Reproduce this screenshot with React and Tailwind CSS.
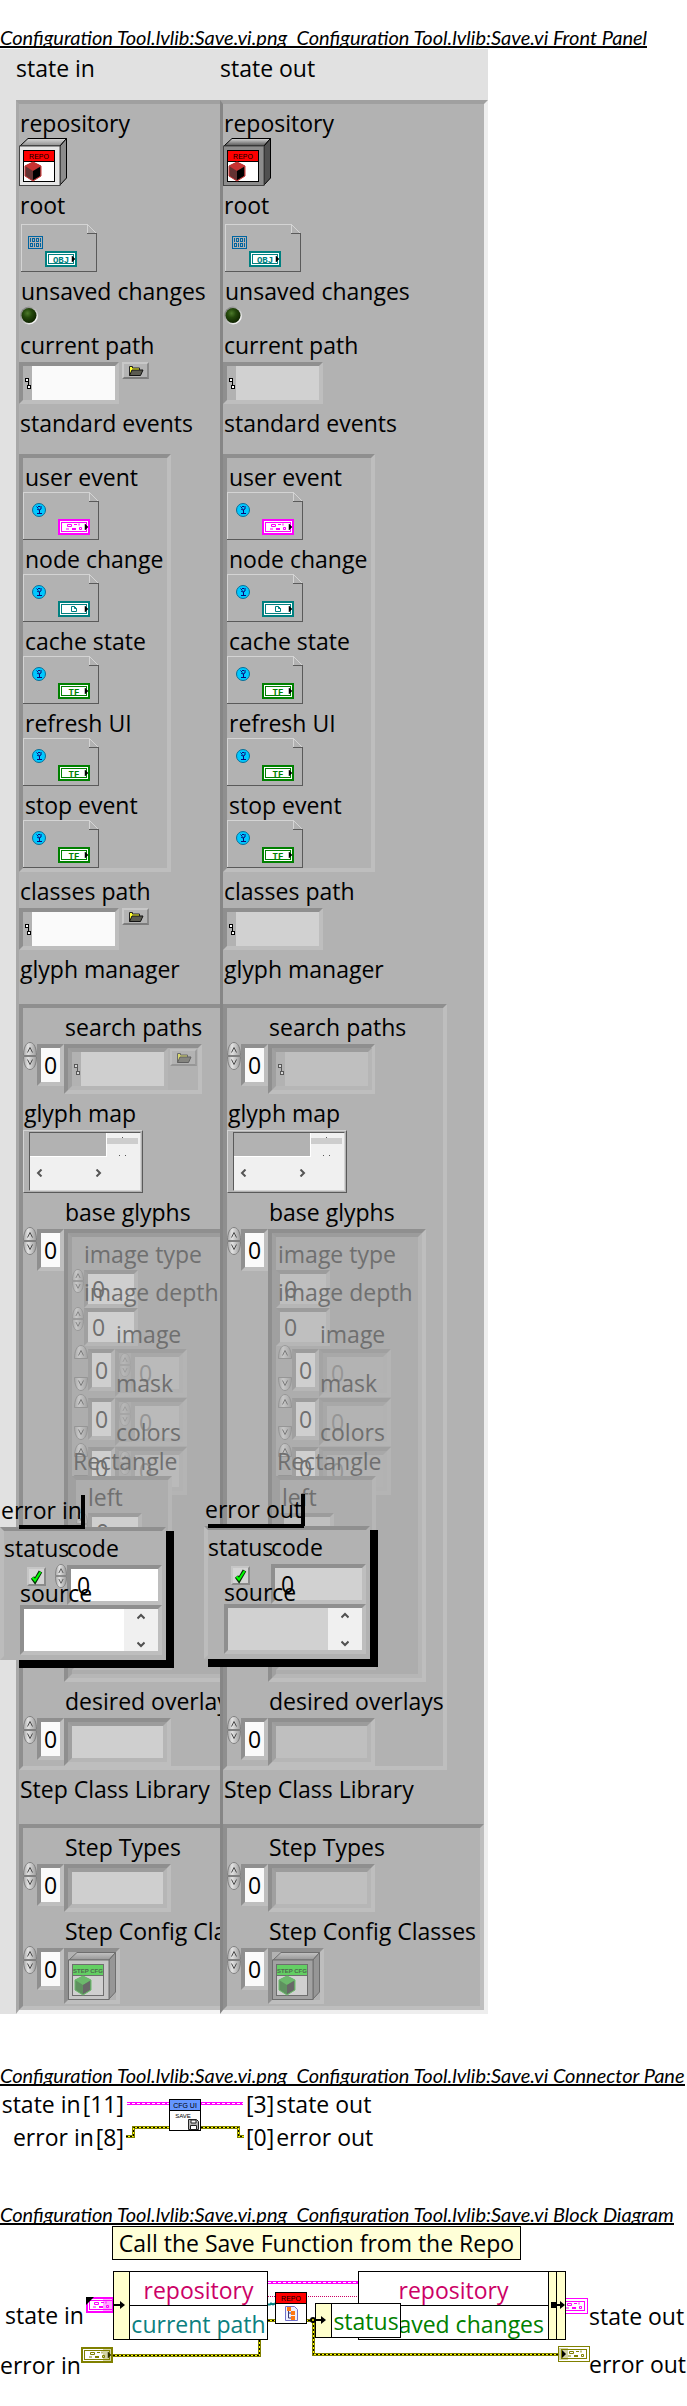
import React, { useId } from "react";

const cx = (...parts) => parts.filter(Boolean).join(" ");

const SUNKEN =
  "border-4 border-t-[#8f8f8f] border-l-[#8f8f8f] border-r-[#bebebe] border-b-[#bebebe]";
const SUNKEN_SOFT =
  "border-4 border-t-[#9c9c9c] border-l-[#a0a0a0] border-r-[#b6b6b6] border-b-[#b6b6b6]";

function Heading({ children }) {
  return (
    <h2 className="h-6 w-fit overflow-hidden whitespace-pre border-b-2 border-black font-['Lato',sans-serif] text-[20px] italic leading-[26px]">
      {children}
    </h2>
  );
}

/* ---------- small drawings ---------- */

function Cube({ x, y, top, left, right }) {
  return (
    <g>
      <path d={`M${x + 8} ${y}l8 4v10l-8 5l-8-5v-10z`} fill={left} />
      <path d={`M${x + 8} ${y}l8 4l-8 5l-8-5z`} fill={top} />
      <path d={`M${x + 8} ${y + 9}l7-4v9l-7 4z`} fill={right} />
      <path d={`M${x + 8} ${y}l8 4v10l-8 5l-8-5v-10z`} fill="none" stroke={top} />
    </g>
  );
}

function ClassIcon({ title, face, dark, step }) {
  const line = step ? "#6e6e6e" : "#000";
  return (
    <svg viewBox="0 0 48 48" className="block h-12 w-12" role="img" aria-label={title}>
      <defs>
        <linearGradient id={`top-${title.length}-${face.slice(1)}`} x1="0" x2="0" y1="1" y2="0">
          <stop offset="0" stopColor={dark} />
          <stop offset="1" stopColor={step ? "#c4c4c4" : "#d8d8d8"} />
        </linearGradient>
      </defs>
      <path d="M1 8L9 .5H47.500L41 8z" fill={`url(#top-${title.length}-${face.slice(1)})`} stroke={line} />
      <path d="M41 8L47.500 .5V40L41 47z" fill={dark} stroke={line} />
      <rect x=".5" y="8" width="40.500" height="39.500" fill={face} stroke={step ? "#6e6e6e" : "#444"} />
      <rect x="4.500" y="12.500" width="31" height="31" fill={step ? "#d0d0d0" : "#fff"} stroke={line} />
      <rect x="5" y="13" width="30" height="10" fill={step ? "#63cf63" : "#ff0000"} />
      <path d="M4 23.500H36" stroke={line} />
      <text
        x="20"
        y="20.500"
        textAnchor="middle"
        fontSize={step ? "6" : "7"}
        fontFamily="Liberation Sans, sans-serif"
        fontWeight={step ? "700" : "400"}
        fill={step ? "#4f6a4f" : "#000"}
      >
        {title}
      </text>
      {step ? (
        <Cube x={7} y={24} top="#6cb96c" left="#5f9160" right="#686868" />
      ) : (
        <Cube x={6} y={24} top="#c83232" left="#643232" right="#000" />
      )}
    </svg>
  );
}

function TerminalGlyph({ kind }) {
  if (kind === "OBJ" || kind === "TF") {
    return (
      <text
        x="16"
        y="11.500"
        textAnchor="middle"
        fontSize="9"
        fontWeight="700"
        fontFamily="Liberation Mono, monospace"
        fill="currentColor"
      >
        {kind}
      </text>
    );
  }
  if (kind === "doc") {
    return <path d="M13.500 5.500h3l2 2v3h-5z M16.500 5.500v2h2" fill="none" stroke="currentColor" />;
  }
  return (
    <g fill="none" stroke="currentColor">
      <path d="M9.500 5.500h4v2h-4zM16 5.500h3M21 4.500v2M21.500 8.500h2v2h-2z" />
      <path d="M8 10h3M14 9.500h4M14 10.500h4" />
    </g>
  );
}

function Terminal({ kind, x = 0, y = 0, color }) {
  return (
    <g transform={`translate(${x} ${y})`} color={color}>
      <rect x="1" y="1" width="30" height="14" fill="#fff" stroke="currentColor" strokeWidth="2" />
      <rect x="3.500" y="3.500" width="25" height="9" fill="#fff" stroke="currentColor" />
      <TerminalGlyph kind={kind} />
      <path d="M27 5l3 3l-3 3z" fill="#000" stroke="#000" strokeWidth=".5" />
    </g>
  );
}

function RefnumBox({ badge, kind, color, label }) {
  return (
    <svg viewBox="0 0 76 48" className="block h-12 w-[76px]" role="img" aria-label={label} shapeRendering="crispEdges">
      <path d="M.5 47.500V.5H66.500L75.500 9.500" fill="none" stroke="#d4d4d4" />
      <path d="M66.500 .5V9.500" fill="none" stroke="#d4d4d4" />
      <path d="M66 9.500H75.500V47.500H0" fill="none" stroke="#5a5a5a" />
      {badge === "bits" ? (
        <g fill="none" stroke="#0064a0">
          <rect x="7.500" y="12.500" width="14" height="12" />
          <path d="M9.500 14v4M11.500 14.500h2v3h-2zM15.500 14.500h2v3h-2zM19.500 14v4M9.500 19.500h2v3h-2zM13.500 19v4M15.500 19.500h2v3h-2zM19.500 19v4" />
        </g>
      ) : (
        <g shapeRendering="auto">
          <circle cx="16" cy="18" r="6.500" fill="#00c8ff" stroke="#0a6e96" />
          <path d="M13.500 14.500l2 2M18 14v3l-2 1l-2-1M15 14.500h2M16.500 18v3M14 21.500h5" fill="none" stroke="#0a0a78" />
        </g>
      )}
      <g shapeRendering="auto">
        <Terminal kind={kind} x={badge === "bits" ? 24 : 35} y={27} color={color} />
      </g>
    </svg>
  );
}

function Led() {
  return (
    <svg viewBox="0 0 20 20" className="block h-5 w-5" role="img" aria-label="off">
      <defs>
        <radialGradient id="led" cx=".4" cy=".35" r=".65">
          <stop offset="0" stopColor="#4d7a2b" />
          <stop offset=".45" stopColor="#24480c" />
          <stop offset="1" stopColor="#0f2400" />
        </radialGradient>
        <linearGradient id="ledring" x1="0" y1="0" x2="1" y2="1">
          <stop offset=".2" stopColor="#8a8a8a" />
          <stop offset=".8" stopColor="#f4f4f4" />
        </linearGradient>
      </defs>
      <circle cx="10" cy="9.500" r="9" fill="url(#ledring)" />
      <circle cx="10" cy="9.500" r="7.500" fill="url(#led)" />
    </svg>
  );
}

function FolderIcon() {
  return (
    <svg viewBox="0 0 16 12" className="h-3 w-4" aria-hidden="true">
      <path d="M1.500 10.500V1.500H4.500V3H11.500V5" fill="#ffff30" stroke="#222" />
      <path d="M1.500 10.500L4 5H15L12.500 10.500z" fill="#5a5a50" stroke="#111" />
    </svg>
  );
}

function PathGlyph() {
  return (
    <svg viewBox="0 0 6 11" className="h-[11px] w-1.5" aria-hidden="true" shapeRendering="crispEdges">
      <path d="M.5 .5h3v3h-3zM2.500 7.500h3v3h-3zM3.500 3.500v4" fill="#fff" stroke="#000" />
    </svg>
  );
}

/* ---------- controls ---------- */

function Half({ down, label }) {
  const id = useId();
  return (
    <button type="button" aria-label={label} className="block min-h-0 flex-none">
      <svg viewBox="0 0 14 14" className="block h-full w-full" preserveAspectRatio="none">
        <defs>
          <linearGradient id={id} x1="0" x2="1" y1="0" y2="0">
            <stop offset="0" stopColor="#a8a8a8" />
            <stop offset=".35" stopColor="#e2e2e2" />
            <stop offset="1" stopColor="#9a9a9a" />
          </linearGradient>
        </defs>
        <g transform={down ? "matrix(1 0 0 -1 0 14)" : undefined}>
          <path d="M.5 13.500C.5 6 3 .5 7 .5S13.500 6 13.500 13.500z" fill={`url(#${id})`} stroke="#808080" />
          <path d="M4.500 10.500L7 5.500L9.500 10.500" fill="none" stroke="#4e4e4e" />
        </g>
      </svg>
    </button>
  );
}

function Spinner({ name, small, split, faded, className }) {
  return (
    <div
      className={cx(
        "flex flex-none flex-col",
        small ? "w-3 *:h-3 *:w-3" : "w-3.5 *:h-3.5 *:w-3.5",
        split && "h-[46px] justify-between",
        faded,
        className
      )}
    >
      <Half label={`Increase ${name}`} />
      <Half down label={`Decrease ${name}`} />
    </div>
  );
}

function IndexBox({ name, dim }) {
  return (
    <input
      type="text"
      defaultValue="0"
      aria-label={`${name} index`}
      className={cx(
        "h-[42px] w-[27px] flex-none p-0 text-center text-[23px] leading-8",
        dim ? "bg-[#cfcfcf] text-[#6f6f6f]" : "bg-[#fafafa]",
        dim ? SUNKEN_SOFT : SUNKEN
      )}
    />
  );
}

function Field({ label, indent = "", gap = "", htmlFor, children }) {
  const cls = cx("block h-8 whitespace-nowrap leading-[34px]", indent);
  return (
    <div className="pt-0.5">
      {htmlFor ? (
        <label htmlFor={htmlFor} className={cls}>
          {label}
        </label>
      ) : (
        <div className={cls}>{label}</div>
      )}
      <div className={gap}>{children}</div>
    </div>
  );
}

function PathBox({ id, indicator, name, dim }) {
  return (
    <div
      className={cx(
        "flex h-[42px] w-[100px] flex-none items-center",
        dim ? SUNKEN_SOFT : SUNKEN
      )}
    >
      <span className={cx("flex w-[9px] flex-none justify-center", dim && "opacity-50")}>
        <PathGlyph />
      </span>
      <input
        id={id}
        type="text"
        aria-label={name}
        readOnly={indicator}
        className={cx(
          "h-full min-w-0 flex-1",
          dim ? (indicator ? "bg-[#bfbfbf]" : "bg-[#cfcfcf]") : indicator ? "bg-[#d1d1d1]" : "bg-[#fafafa]"
        )}
      />
    </div>
  );
}

function BrowseButton({ name, dim }) {
  return (
    <button
      type="button"
      aria-label={`Browse ${name}`}
      className={cx(
        "flex h-[17px] w-[27px] flex-none items-center justify-center border-2 border-t-[#c8c8c8] border-l-[#c8c8c8] border-r-[#8a8a8a] border-b-[#7c7c7c] bg-[#b4b4b4]",
        dim && "opacity-50"
      )}
    >
      <FolderIcon />
    </button>
  );
}

function PathField({ label, indicator }) {
  const id = useId();
  return (
    <Field label={label} htmlFor={id} indent="pl-px" gap="pt-0.5">
      <div className="flex items-start gap-[3px]">
        <PathBox id={id} indicator={indicator} />
        {!indicator && <BrowseButton name={label} />}
      </div>
    </Field>
  );
}

function ArrayField({ label, children }) {
  return (
    <Field label={label} indent="pl-[42px]" gap="pt-0.5">
      <div className="flex items-start">
        <Spinner name={label} className="-mt-0.5" />
        <IndexBox name={label} />
        {children}
      </div>
    </Field>
  );
}

function EmptyElement({ indicator }) {
  return (
    <div className={cx("h-12 w-[107px] flex-none", SUNKEN)}>
      <div className={cx("h-full", SUNKEN_SOFT, indicator ? "bg-[#bfbfbf]" : "bg-[#cfcfcf]")} />
    </div>
  );
}

function GlyphMap() {
  return (
    <div className="flex h-[63px] w-[120px] border border-t-[#d4d4d4] border-l-[#d4d4d4] border-r-[#5a5a5a] border-b-[#5a5a5a] py-px pr-px pl-[5px]">
      <div className="flex w-full flex-col border border-t-[#5a5a5a] border-l-[#5a5a5a] border-r-[#d4d4d4] border-b-[#d4d4d4] bg-[#f0f0f0]">
        <div className="flex h-6">
          <div className="w-[77px] border-r border-b border-white bg-[#b2b2b2]" />
          <div className="flex flex-1 flex-col items-center pr-0.5">
            <span className="mt-1 h-px w-px bg-[#555]" />
            <span className="h-1.5 w-full bg-[#cdcdcd]" />
            <span className="mt-[11px] h-px w-[7px] border-x border-[#555]" />
          </div>
        </div>
        <div className="flex h-8 items-center gap-[52px] pl-1.5">
          {["M5.500 .5L2 4L5.500 7.500", "M1.500 .5L5 4L1.500 7.500"].map((d, i) => (
            <button key={d} type="button" aria-label={i ? "Scroll right" : "Scroll left"} className="h-2 w-[7px]">
              <svg viewBox="0 0 7 8" className="block h-2 w-[7px]">
                <path d={d} fill="none" stroke="#555" strokeWidth="2" />
              </svg>
            </button>
          ))}
        </div>
      </div>
    </div>
  );
}

/* ---------- base glyphs: disabled element with overlapping captions ---------- */

function DimNumber({ label, indicator }) {
  return (
    <div className="relative flex h-[38px] items-start">
      {!indicator && <Spinner small name={label} faded="opacity-50" />}
      <input
        type="text"
        defaultValue="0"
        readOnly={indicator}
        aria-label={label}
        className={cx(
          "mt-px h-[38px] w-[54px] flex-none pl-1 text-[23px] leading-8 text-[#6f6f6f]",
          SUNKEN_SOFT,
          indicator ? "bg-[#bfbfbf]" : "bg-[#cfcfcf]"
        )}
      />
      <span className={cx("absolute bottom-full h-8 leading-[34px]", indicator ? "left-0.5" : "left-3")}>{label}</span>
    </div>
  );
}

function DimArray({ label, indicator }) {
  return (
    <div className="relative flex h-[49px] items-start pl-0.5">
      <Spinner split name={label} faded="opacity-50" className="-mt-1" />
      <IndexBox dim name={label} />
      <div className="h-12 w-[72px] border-4 border-t-[#a0a0a0] border-l-[#a4a4a4] border-r-[#b4b4b4] border-b-[#b4b4b4]">
        <div className="flex">
          {!indicator && <Spinner small name={`${label} element`} faded="opacity-20" />}
          <input
            type="text"
            defaultValue="0"
            readOnly={indicator}
            aria-label={`${label} element`}
            className={cx(
              "h-10 min-w-0 flex-1 border-4 border-t-[#a8a8a8] border-l-[#a8a8a8] border-r-[#b2b2b2] border-b-[#b2b2b2] pl-1 text-[23px] leading-8 text-[#959595]",
              indicator ? "bg-[#b3b3b3]" : "bg-[#bababa]"
            )}
          />
        </div>
      </div>
      <span className="absolute bottom-full left-11 h-8 leading-[34px]">{label}</span>
    </div>
  );
}

function BaseGlyphs({ indicator }) {
  return (
    <div
      className={cx(
        "h-[453px] flex-none bg-[#adadad] text-[#6f6f6f]",
        indicator ? "w-[158px]" : "w-[200px]",
        SUNKEN
      )}
    >
      <div className={cx("h-full pt-8", SUNKEN_SOFT)}>
        <DimNumber label="image type" indicator={indicator} />
        <DimNumber label="image depth" indicator={indicator} />
        <div className="pt-1">
          <DimArray label="image" indicator={indicator} />
          <DimArray label="mask" indicator={indicator} />
          <DimArray label="colors" indicator={indicator} />
        </div>
        <div className="relative -mt-5 h-[194px] w-[100px]">
          <div className={cx("h-full bg-[#adadad] pt-8", SUNKEN_SOFT)}>
            <DimNumber label="left" indicator={indicator} />
          </div>
          <span className="absolute bottom-full left-px h-8 leading-[34px]">Rectangle</span>
        </div>
      </div>
    </div>
  );
}

/* ---------- clusters ---------- */

const EVENTS = [
  ["user event", "cluster", "#ff00ff"],
  ["node change", "doc", "#008080"],
  ["cache state", "TF", "#008000"],
  ["refresh UI", "TF", "#008000"],
  ["stop event", "TF", "#008000"],
];

function StateCluster({ indicator }) {
  const repoFace = indicator ? "#8c8c8c" : "#e6e6e6";
  const repoSide = indicator ? "#505050" : "#8c8c8c";
  return (
    <>
      <Field label="repository" indent="pl-px">
        <ClassIcon title="REPO" face={repoFace} dark={repoSide} />
      </Field>
      <Field label="root" indent="pl-px" gap="pt-1 pl-0.5">
        <RefnumBox badge="bits" kind="OBJ" color="#008080" label="root" />
      </Field>
      <Field label="unsaved changes" indent="pl-0.5">
        <Led />
      </Field>
      <PathField label="current path" indicator={indicator} />
      <Field label="standard events" indent="pl-px" gap="pt-4">
        <div className={cx("w-[152px]", SUNKEN)}>
          {EVENTS.map(([name, kind, color]) => (
            <Field key={name} label={name} indent="pl-0.5">
              <RefnumBox badge="event" kind={kind} color={color} label={name} />
            </Field>
          ))}
        </div>
      </Field>
      <PathField label="classes path" indicator={indicator} />
      <Field label="glyph manager" indent="pl-px" gap="pt-5">
        <div className={cx(indicator ? "w-[224px]" : "w-[260px]", SUNKEN)}>
          <ArrayField label="search paths">
            <div className={cx("flex h-[50px] flex-none items-start", indicator ? "w-[107px]" : "w-[138px]", SUNKEN)}>
              <PathBox dim indicator={indicator} name="search path" />
              {!indicator && (
                <div className="pt-px pl-0.5">
                  <BrowseButton dim name="search path" />
                </div>
              )}
            </div>
          </ArrayField>
          <Field label="glyph map" indent="pl-px" gap="pt-0.5">
            <GlyphMap />
          </Field>
          <ArrayField label="base glyphs">
            <BaseGlyphs indicator={indicator} />
          </ArrayField>
          <ArrayField label="desired overlays">
            <EmptyElement indicator={indicator} />
          </ArrayField>
        </div>
      </Field>
      <Field label="Step Class Library" indent="pl-px" gap="pt-5">
        <div className={cx("pb-0.5", !indicator && "w-[264px]", SUNKEN)}>
          <ArrayField label="Step Types">
            <EmptyElement indicator={indicator} />
          </ArrayField>
          <ArrayField label="Step Config Classes">
            <div className={cx("h-14 w-14 flex-none", SUNKEN)}>
              <ClassIcon step title="STEP CFG" face={indicator ? "#a2a2a2" : "#c6c6c6"} dark="#969696" />
            </div>
          </ArrayField>
        </div>
      </Field>
    </>
  );
}

function ScrollArrow({ down }) {
  return (
    <button type="button" aria-label={down ? "Scroll down" : "Scroll up"} className="flex h-3.5 w-full items-center justify-center">
      <svg viewBox="0 0 8 7" className="h-[7px] w-2">
        <path d={down ? "M.5 1.500L4 5L7.500 1.500" : "M.5 5.500L4 2L7.500 5.500"} fill="none" stroke="#505050" strokeWidth="2" />
      </svg>
    </button>
  );
}

function ErrorCluster({ title, indicator }) {
  const id = useId();
  const fill = indicator ? "bg-[#d1d1d1]" : "bg-white";
  return (
    <div className="relative w-[174px]">
      <div
        className={cx(
          "h-[34px] border-r-4 border-black whitespace-nowrap pl-px leading-[30px]",
          indicator ? "w-[101px]" : "w-[85px]"
        )}
      >
        {title}
      </div>
      <div
        className={cx(
          "absolute top-[30px] h-1 bg-black",
          indicator ? "left-1 w-24" : "left-[19px] w-[66px]"
        )}
      />
      <div className="-mt-0.5 flex">
        <div className="h-[133px] w-[166px] border-4 border-t-[#8f8f8f] border-l-[#bcbcbc] border-r-[#b2b2b2] border-b-[#b2b2b2] bg-[#b2b2b2]">
          <div className="flex h-8 leading-[34px]">
            <label htmlFor={`${id}s`} className="w-[63px]">status</label>
            <label htmlFor={`${id}c`}>code</label>
          </div>
          <div className="flex h-[42px] items-start">
            <div className="relative mt-1 ml-[23px] h-[19px] w-[19px] flex-none">
              <input
                id={`${id}s`}
                type="checkbox"
                defaultChecked
                className="block h-full w-full appearance-none border-2 border-t-[#c6c6c6] border-l-[#c6c6c6] border-r-[#8a8a8a] border-b-[#8a8a8a] bg-[#d4d4d4]"
              />
              <svg viewBox="0 0 19 19" className="pointer-events-none absolute inset-0">
                <path d="M5.500 10.500L8 14L13.500 4.500" fill="none" stroke="#053005" strokeWidth="4" />
                <path d="M5.500 10.500L8 13.500L13.500 5" fill="none" stroke="#00ff00" strokeWidth="2" />
              </svg>
            </div>
            <div className="flex w-[21px] flex-none justify-end pt-px">
              {!indicator && <Spinner small name={`${title} code`} />}
            </div>
            <input
              id={`${id}c`}
              type="text"
              defaultValue="0"
              readOnly={indicator}
              className={cx("mt-0.5 h-10 min-w-0 flex-1 pl-1.5 text-[23px] leading-8", SUNKEN, fill)}
            />
          </div>
          <div className="relative h-[50px] pl-4">
            <label htmlFor={`${id}m`} className="absolute bottom-full left-4 -mb-1 leading-8">
              source
            </label>
            <div className={cx("flex h-full", SUNKEN)}>
              <textarea id={`${id}m`} readOnly={indicator} className={cx("h-full min-w-0 flex-1 resize-none", fill)} />
              <div className="flex w-[34px] flex-none flex-col justify-between bg-[#f0f0f0]">
                <ScrollArrow />
                <ScrollArrow down />
              </div>
            </div>
          </div>
        </div>
        <div className="mt-1 w-2 bg-black" />
      </div>
      <div className={cx("h-2 bg-black", indicator ? "ml-1" : "ml-[19px]")} />
    </div>
  );
}

function FrontPanel() {
  return (
    <div className="relative mt-px w-[488px] max-w-full bg-[#e1e1e1] pl-4">
      <div className="flex h-[51px] pt-0.5 leading-[34px]">
        <div className="w-[204px]">state in</div>
        <div>state out</div>
      </div>
      <div className="flex items-stretch">
        <section
          aria-label="state in"
          className="w-[204px] flex-none overflow-hidden border-t-4 border-b-4 border-l-[3px] border-t-[#a0a0a0] border-b-[#f4f4f4] border-l-[#a8a8a8] bg-[#b2b2b2]"
        >
          <StateCluster />
        </section>
        <section
          aria-label="state out"
          className="min-w-0 flex-1 border-4 border-l-[3px] border-t-[#a0a0a0] border-b-[#eeeeee] border-l-[#868686] border-r-[#eeeeee] bg-[#b2b2b2]"
        >
          <StateCluster indicator />
        </section>
      </div>
      <div className="absolute top-[1446px] left-0">
        <ErrorCluster title="error in" />
      </div>
      <div className="absolute top-[1445px] left-[204px]">
        <ErrorCluster title="error out" indicator />
      </div>
    </div>
  );
}

/* ---------- connector pane ---------- */

function ClusterWire({ d }) {
  return (
    <>
      <path d={d} fill="none" stroke="#ff00ff" strokeWidth="3" />
      <path d={d} fill="none" stroke="#fff" strokeDasharray="3 2" />
    </>
  );
}

function ErrorWire({ d }) {
  return (
    <>
      <path d={d} fill="none" stroke="#808000" strokeWidth="3" />
      <path d={d} fill="none" stroke="#ffff00" />
      <path d={d} fill="none" stroke="#000" strokeDasharray="2 2" />
    </>
  );
}

function PinRow({ first, second, end }) {
  return (
    <div className={cx("flex h-[33px] whitespace-nowrap", end ? "justify-end gap-0.5" : "gap-0.5")}>
      <span>{first}</span>
      <span>{second}</span>
    </div>
  );
}

function ConnectorPane() {
  return (
    <div className="flex pt-px leading-[34px]">
      <div className="w-[124px]">
        <PinRow end first="state in" second="[11]" />
        <PinRow end first="error in" second="[8]" />
      </div>
      <svg viewBox="0 0 122 66" className="h-[66px] w-[122px] flex-none" role="img" aria-label="Save.vi connector pane">
        <ClusterWire d="M3 16.500H119" />
        <ErrorWire d="M2 49.500H9.500V40.500H114.500V49.500H120" />
        <rect x="45.500" y="12.500" width="31" height="31" fill="#fff" stroke="#000" />
        <rect x="46" y="13" width="30" height="10" fill="#6496ff" />
        <path d="M45 23.500H77" stroke="#000" />
        <text x="61" y="20.500" textAnchor="middle" fontSize="7" fontFamily="Liberation Sans, sans-serif">CFG UI</text>
        <text x="59" y="31" textAnchor="middle" fontSize="6" fontFamily="Liberation Sans, sans-serif">SAVE</text>
        <path d="M64.500 32.500H72.500L74.500 34.500V42.500H64.500z" fill="#b4b4b4" stroke="#222" />
        <path d="M67 33h5v3h-5z M66.500 38.500h6v4h-6z" fill="#fff" stroke="#222" />
      </svg>
      <div>
        <PinRow first="[3]" second="state out" />
        <PinRow first="[0]" second="error out" />
      </div>
    </div>
  );
}

/* ---------- block diagram ---------- */

function Arrow({ x, y }) {
  return <path d={`M${x} ${y - 1}h6v-3l5 4l-5 4v-3h-6z`} fill="#000" />;
}

function BlockDiagram() {
  return (
    <div className="relative h-[181px]">
      <svg viewBox="0 0 687 181" width="687" height="181" className="absolute top-0 left-0" aria-hidden="true">
        <ClusterWire d="M268 57.500H358" />
        <path d="M268 71.500H275M308 71.500H358" stroke="#cc0066" strokeDasharray="1 1" />
        <path d="M268 79.500h2l1-1l2 1l2-1" stroke="#008080" fill="none" strokeWidth="2" />
        <ErrorWire d="M268 95.500H315" />
        <ErrorWire d="M113 130.500H259.500V115" />
        <ErrorWire d="M313.500 96V129.500H558" />
        <circle cx="313" cy="95" r="3" fill="#000" />
        <circle cx="313" cy="95" r="1" fill="#ffff00" />
        <g color="#ff00ff">
          <rect x="87" y="73" width="26" height="14" fill="#fff" stroke="currentColor" strokeWidth="2" />
          <rect x="89.500" y="75.500" width="23" height="9" fill="none" stroke="currentColor" />
          <g transform="translate(85 72)">
            <TerminalGlyph kind="cluster" />
          </g>
          <rect x="103" y="73" width="10" height="14" fill="#ff00ff" opacity=".35" />
          <path d="M86 72h8l-8 8z" fill="#000" />
          <rect x="560.500" y="73.500" width="27" height="15" fill="#fff" stroke="currentColor" />
          <rect x="563.500" y="76.500" width="21" height="9" fill="none" stroke="currentColor" />
          <g transform="translate(558 73)">
            <TerminalGlyph kind="cluster" />
          </g>
        </g>
        <Terminal kind="cluster" x={81} y={122} color="#808000" />
        <rect x="103" y="123" width="9" height="14" fill="#808000" opacity=".35" />
        <g color="#808000">
          <rect x="558.500" y="121.500" width="31" height="15" fill="#fff" stroke="currentColor" />
          <rect x="561.500" y="124.500" width="25" height="9" fill="none" stroke="currentColor" />
          <g transform="translate(560 121)">
            <TerminalGlyph kind="cluster" />
          </g>
          <rect x="559" y="123" width="9" height="12" fill="currentColor" opacity=".35" />
          <path d="M562 125l4 4l-4 4z" fill="#000" />
        </g>
        <rect x="275.500" y="67.500" width="31" height="31" fill="#fff" stroke="#000" />
        <rect x="276" y="68" width="30" height="10" fill="#ff0000" />
        <path d="M275 78.500H307" stroke="#000" />
        <text x="291" y="75.500" textAnchor="middle" fontSize="7" fontFamily="Liberation Sans, sans-serif">REPO</text>
        <path d="M285.500 81.500H294.500L297.500 84.500V95.500H285.500z" fill="#eef0ff" stroke="#7070c8" />
        <path d="M288.500 85V93H292M288.500 88H292" fill="none" stroke="#3c3c78" />
        <path d="M287 82h4v4h-4zM291 86h4v4h-4zM291 91h4v4h-4z" fill="#ff7814" />
      </svg>

      <div className="absolute top-px left-[112px] flex h-[34px] w-[409px] items-center justify-center border border-black bg-[#ffffd7] whitespace-nowrap">
        Call the Save Function from the Repo
      </div>

      <div className="absolute top-[46px] left-[113px] flex h-[69px] w-[155px] border border-black bg-white">
        <div className="w-4 flex-none border-r border-black bg-[#ffffcc]" />
        <div className="flex flex-1 flex-col text-center leading-9 whitespace-nowrap">
          <div className="h-[34px] border-b border-black text-[#cc0066]">repository</div>
          <div className="h-[33px] text-[#0c8080]">current path</div>
        </div>
      </div>

      <div className="absolute top-[46px] left-[358px] flex h-[69px] w-[208px] border border-black bg-white">
        <div className="flex min-w-0 flex-1 flex-col leading-9">
          <div className="h-[34px] border-b border-black text-center text-[#cc0066]">repository</div>
          <div className="flex h-[33px] justify-end pr-1 whitespace-nowrap text-[#008000]">unsaved changes</div>
        </div>
        <div className="w-[9px] border-x border-black bg-[#ffffcc]" />
        <div className="w-2 bg-[#ffffcc]" />
      </div>

      <div className="absolute top-[78px] left-[315px] flex h-[35px] w-[86px] border border-black bg-white leading-[34px] text-[#008000]">
        <div className="w-4 border-r border-black bg-[#ffffcc]" />
        <div className="flex-1 text-center">status</div>
      </div>

      <svg viewBox="0 0 687 181" width="687" height="181" className="pointer-events-none absolute top-0 left-0" aria-hidden="true">
        <Arrow x={114} y={80} />
        <Arrow x={315} y={95} />
        <path d="M551 77h5v6h-5z" fill="#000" />
        <Arrow x={554} y={80} />
      </svg>

      <span className="absolute top-[74px] left-[5px] leading-8">state in</span>
      <span className="absolute top-[124px] left-0 leading-8">error in</span>
      <span className="absolute top-[75px] left-[589px] leading-8 whitespace-nowrap">state out</span>
      <span className="absolute top-[123px] left-[589px] leading-8 whitespace-nowrap">error out</span>
    </div>
  );
}

export default function App() {
  return (
    <main className="min-h-screen overflow-x-hidden bg-white pt-6 font-['Open_Sans',sans-serif] text-[23px] text-black">
      <section>
        <Heading>{"Configuration Tool.lvlib:Save.vi.png  Configuration Tool.lvlib:Save.vi Front Panel"}</Heading>
        <FrontPanel />
      </section>
      <section className="pt-12">
        <Heading>{"Configuration Tool.lvlib:Save.vi.png  Configuration Tool.lvlib:Save.vi Connector Pane"}</Heading>
        <ConnectorPane />
      </section>
      <section className="pt-12">
        <Heading>{"Configuration Tool.lvlib:Save.vi.png  Configuration Tool.lvlib:Save.vi Block Diagram"}</Heading>
        <BlockDiagram />
      </section>
    </main>
  );
}
